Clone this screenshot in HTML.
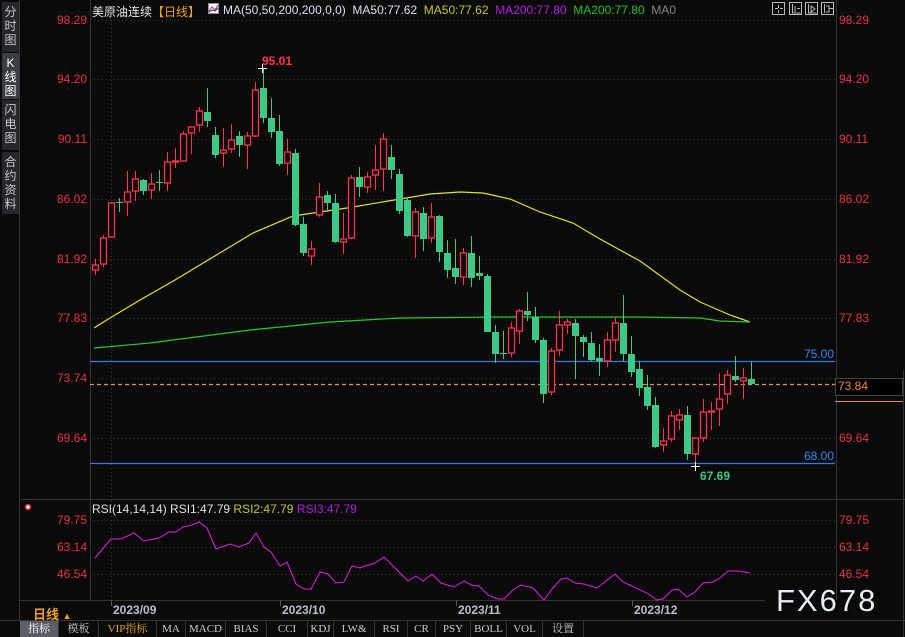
<!DOCTYPE html>
<html><head><meta charset="utf-8"><style>
*{margin:0;padding:0;box-sizing:border-box}
body{width:905px;height:637px;background:#0a0a0a;overflow:hidden;font-family:"Liberation Sans","Noto Sans CJK SC",sans-serif;position:relative}
.t{position:absolute;white-space:nowrap;font-size:12px}
.sb{position:absolute;left:2px;width:17px;background:#25272b;color:#c8c8c8;font-size:12px;line-height:14px;text-align:center;padding-top:3px}
.tab{position:absolute;top:621px;height:16px;border-right:1px solid #333;color:#ccc;font-size:11px;font-family:"Liberation Serif","Noto Serif CJK SC",serif;text-align:center;line-height:16px}
</style></head><body>
<svg id="s" width="905" height="637" style="position:absolute;left:0;top:0" xmlns="http://www.w3.org/2000/svg">
<g stroke="#3a3a3a" stroke-dasharray="1,3" stroke-width="1">
<line x1="90" y1="20.5" x2="835" y2="20.5"/><line x1="90" y1="79.5" x2="835" y2="79.5"/><line x1="90" y1="139.5" x2="835" y2="139.5"/><line x1="90" y1="199.5" x2="835" y2="199.5"/><line x1="90" y1="259.5" x2="835" y2="259.5"/><line x1="90" y1="318.5" x2="835" y2="318.5"/><line x1="90" y1="378.5" x2="835" y2="378.5"/><line x1="90" y1="438.5" x2="835" y2="438.5"/>
<line x1="90" y1="520.5" x2="835" y2="520.5"/><line x1="90" y1="547.5" x2="835" y2="547.5"/><line x1="90" y1="574.5" x2="835" y2="574.5"/>
<line x1="111.5" y1="20" x2="111.5" y2="600"/>
</g>
<g stroke="#333" stroke-width="1">
<line x1="19.5" y1="0" x2="19.5" y2="620"/>
<line x1="90.5" y1="0" x2="90.5" y2="600"/>
<line x1="836.5" y1="0" x2="836.5" y2="600"/>
<line x1="903.5" y1="370" x2="903.5" y2="637"/>
<line x1="19" y1="499.5" x2="905" y2="499.5"/>
<line x1="19" y1="600.5" x2="765" y2="600.5"/>
<line x1="0" y1="620.5" x2="905" y2="620.5"/>
</g>
<g stroke="#555"><line x1="111.5" y1="600" x2="111.5" y2="606"/><line x1="280.5" y1="600" x2="280.5" y2="606"/><line x1="456.5" y1="600" x2="456.5" y2="606"/><line x1="632.5" y1="600" x2="632.5" y2="606"/></g>
<polyline fill="none" stroke="#e8e020" stroke-width="1.2" points="94,328 110,318 140,300 175,280 253,233 293,216 347,208 400,199 430,194 460,192 483,193 510,199 540,212 573,223 600,239 640,261 680,290 700,302 730,315 750,322"/>
<polyline fill="none" stroke="#22cc22" stroke-width="1.2" points="94,348 150,343 250,330 330,322 400,318 500,317 640,317 700,318 720,321 750,322"/>
<line x1="90" y1="361.5" x2="835" y2="361.5" stroke="#2b7fe0" stroke-width="1.3"/>
<line x1="90" y1="463.5" x2="835" y2="463.5" stroke="#2b7fe0" stroke-width="1.3"/>
<line x1="90" y1="384.5" x2="835" y2="384.5" stroke="#f0902a" stroke-width="1.2" stroke-dasharray="4,3"/>
<g id="c"></g>
<path d="M258 68.5h9M262.5 64v9" stroke="#fff" stroke-width="1"/>
<path d="M691 466.5h9M695.5 462v9" stroke="#fff" stroke-width="1"/>
<polyline fill="none" stroke="#e020e0" stroke-width="1" points="95,558 111,539 121,539 134,533 144,541 159,538 169,532 176,532 183,527 192,525 199,522 207,528 216,549 230,544 239,547 249,543 256,533 264,547 271,552 280,566 287,562 296,584 304,589 311,589 320,572 328,574 336,583 344,582 352,566 360,568 368,565 375,563 384,557 395,568 408,581 416,576 423,581 432,574 441,583 454,587 464,581 471,585 479,586 488,595 498,599 504,599 513,590 521,585 533,588 544,600 552,589 561,579 567,578 575,583 584,584 597,588 615,574 623,582 647,593 657,600 663,599 672,590 678,589 687,597 695,592 703,583 713,582 720,578 728,571 737,571 745,572 750,573"/>
<rect x="835.5" y="378.5" width="67" height="17" fill="#000" stroke="#444"/>
<line x1="835" y1="401.5" x2="903" y2="401.5" stroke="#f0902a"/>
<g fill="none" stroke="#bbb"><rect x="772.5" y="2.5" width="12" height="12"/><rect x="789.5" y="2.5" width="12" height="12"/><rect x="805.5" y="2.5" width="12" height="12"/><rect x="821.5" y="2.5" width="12" height="12"/>
<path d="M778.5 5v3M778.5 10v3M775 8.5h3M780 8.5h3M792.5 4v9h8M795 6v6M797 8.5h3M808.5 4v9h8M811 6l4 3l-4 3zM824.5 4v9M826 6h3v6h-3M829 8.5h4"/></g>
<circle cx="28" cy="507" r="2.5" fill="#fff" stroke="#f22" stroke-width="1.5"/>
</svg>
<script>
var d=[["r",265,270,259,275],["r",238,264,235,267],["r",203,237,202,238],["g",202,203,198,212],["r",192,202,171,216],["r",179,191,171,201],["g",180,191,179,195],["r",184,190,173,199],["g",182,183,170,191],["r",162,183,152,191],["r",161,162,148,168],["r",134,161,131,162],["r",127,133,126,154],["r",111,125,107,132],["g",112,121,88,127],["g",135,155,127,158],["r",150,153,128,167],["r",140,149,124,153],["g",136,145,131,157],["r",136,145,132,169],["r",90,136,82,137],["g",88,118,68,123],["g",118,132,98,138],["g",131,164,115,166],["r",152,163,139,175],["g",153,225,149,226],["g",224,253,217,256],["r",249,256,241,265],["r",197,215,183,217],["g",195,203,191,212],["g",203,242,194,243],["r",239,242,213,254],["r",178,238,175,239],["g",177,187,167,197],["r",177,187,172,193],["r",170,175,145,190],["r",139,169,133,191],["g",157,170,145,179],["g",174,211,169,214],["g",200,236,197,237],["r",212,236,208,258],["g",213,239,207,251],["r",217,238,203,243],["g",216,252,215,262],["g",253,270,240,278],["g",268,277,239,284],["r",253,277,248,285],["g",253,278,236,287],["g",273,276,256,280],["g",276,332,274,332],["g",332,354,325,363],["g",353,354,331,359],["r",328,353,322,357],["r",311,331,309,344],["g",311,315,292,321],["g",317,340,307,343],["g",340,394,338,403],["r",351,392,348,395],["r",325,350,311,356],["r",322,325,319,334],["g",323,336,319,379],["g",337,342,335,357],["g",343,360,332,361],["g",358,361,344,376],["r",340,361,332,367],["r",323,340,318,352],["g",323,354,295,361],["g",354,372,336,377],["g",369,388,362,396],["g",387,406,375,410],["g",405,447,397,448],["r",441,445,428,452],["r",416,439,411,442],["r",415,420,409,430],["g",415,454,406,460],["r",438,454,437,465],["r",412,438,399,442],["r",411,411,402,430],["r",399,409,373,426],["r",375,394,370,404],["g",376,380,356,382],["r",378,381,368,399],["g",379,384,362,385]];
var h="";d.forEach(function(c,i){var x=95.5+8*i,col=c[0]=="r"?"#ff3352":"#3cc985";
h+='<line x1="'+x+'" y1="'+c[3]+'" x2="'+x+'" y2="'+c[4]+'" stroke="'+col+'"/>';
var hgt=Math.max(c[2]-c[1],1);
if(c[0]=="r")h+='<rect x="'+(x-3)+'" y="'+c[1]+'" width="6" height="'+hgt+'" fill="#0a0a0a" stroke="'+col+'" stroke-width="1.3"/>';
else h+='<rect x="'+(x-3.5)+'" y="'+c[1]+'" width="7" height="'+hgt+'" fill="'+col+'"/>';});
document.getElementById("c").innerHTML=h;
</script>
<div class="sb" style="top:2px;height:50px">分<br>时<br>图</div>
<div class="sb" style="top:53px;height:46px;background:#3a3d42;color:#fff">K<br>线<br>图</div>
<div class="sb" style="top:100px;height:50px">闪<br>电<br>图</div>
<div class="sb" style="top:152px;height:62px">合<br>约<br>资<br>料</div>
<div class="t" style="left:92px;top:3px;color:#e8e8e8">美原油连续<span style="color:#f0a020">【日线】</span></div>
<svg style="position:absolute;left:208px;top:3px" width="11" height="11"><rect x=".5" y=".5" width="10" height="10" fill="#fff" stroke="#88a"/><path d="M1 8l3-4 3 3 3-5" stroke="#d22" fill="none"/><path d="M1 9l3-2 3 1 3-3" stroke="#22d" fill="none"/></svg>
<div class="t" style="left:223px;top:3px;color:#d8e0f0">MA(50,50,200,200,0,0)&nbsp; MA50:77.62&nbsp; <span style="color:#c8c820">MA50:77.62</span>&nbsp; <span style="color:#b020e0">MA200:77.80</span>&nbsp; <span style="color:#20c020">MA200:77.80</span>&nbsp; <span style="color:#888">MA0</span></div>
<div class="t" style="left:262px;top:54px;color:#ff3352;font-weight:bold">95.01</div>
<div class="t" style="left:700px;top:469px;color:#3cc985;font-weight:bold">67.69</div>
<div class="t" style="left:804px;top:347px;color:#2b8cf0">75.00</div>
<div class="t" style="left:804px;top:449px;color:#2b8cf0">68.00</div>
<div class="t" style="left:838px;top:379px;color:#f0902a">73.84</div>
<div id="ax"></div>
<script>
var L=[["98.29",20],["94.20",79],["90.11",139],["86.02",199],["81.92",259],["77.83",318],["73.74",378],["69.64",438],["79.75",520],["63.14",547],["46.54",574]],a="";
L.forEach(function(l){if(l[0]=="73.74")a+='<div class="t" style="left:29px;top:'+(l[1]-7)+'px;width:58px;text-align:right;color:#e8334a">'+l[0]+'</div>';else a+='<div class="t" style="left:29px;top:'+(l[1]-7)+'px;width:58px;text-align:right;color:#e8334a">'+l[0]+'</div><div class="t" style="left:839px;top:'+(l[1]-7)+'px;color:#e8334a">'+l[0]+'</div>';});
document.getElementById("ax").innerHTML=a;
</script>
<div class="t" style="left:92px;top:502px;color:#e0e0e0">RSI(14,14,14) RSI1:47.79 <span style="color:#c8c820">RSI2:47.79</span> <span style="color:#b020e0">RSI3:47.79</span></div>
<div class="t" style="left:113px;top:603px;color:#b8c0cc;font-weight:bold">2023/09</div>
<div class="t" style="left:282px;top:603px;color:#b8c0cc;font-weight:bold">2023/10</div>
<div class="t" style="left:458px;top:603px;color:#b8c0cc;font-weight:bold">2023/11</div>
<div class="t" style="left:634px;top:603px;color:#b8c0cc;font-weight:bold">2023/12</div>
<div class="t" style="left:33px;top:604px;color:#f0a020;font-weight:bold;font-size:13px">日线 <span style="font-size:9px">▲</span></div>
<div class="t" style="left:776px;top:583px;color:#e8eef5;font-size:31px;letter-spacing:2px;text-shadow:1px 1px 2px #000">FX678</div>
<div class="tab" style="left:20px;width:39px;background:#5a5e66;color:#fff">指标</div>
<div class="tab" style="left:59px;width:40px">模板</div>
<div class="tab" style="left:99px;width:58px;color:#f0a020">VIP指标</div>
<div class="tab" style="left:157px;width:29px">MA</div>
<div class="tab" style="left:186px;width:40px">MACD</div>
<div class="tab" style="left:226px;width:41px">BIAS</div>
<div class="tab" style="left:267px;width:41px">CCI</div>
<div class="tab" style="left:308px;width:26px">KDJ</div>
<div class="tab" style="left:334px;width:41px">LW&amp;</div>
<div class="tab" style="left:375px;width:33px">RSI</div>
<div class="tab" style="left:408px;width:28px">CR</div>
<div class="tab" style="left:436px;width:35px">PSY</div>
<div class="tab" style="left:471px;width:36px">BOLL</div>
<div class="tab" style="left:507px;width:36px">VOL</div>
<div class="tab" style="left:543px;width:41px">设置</div>
</body></html>
